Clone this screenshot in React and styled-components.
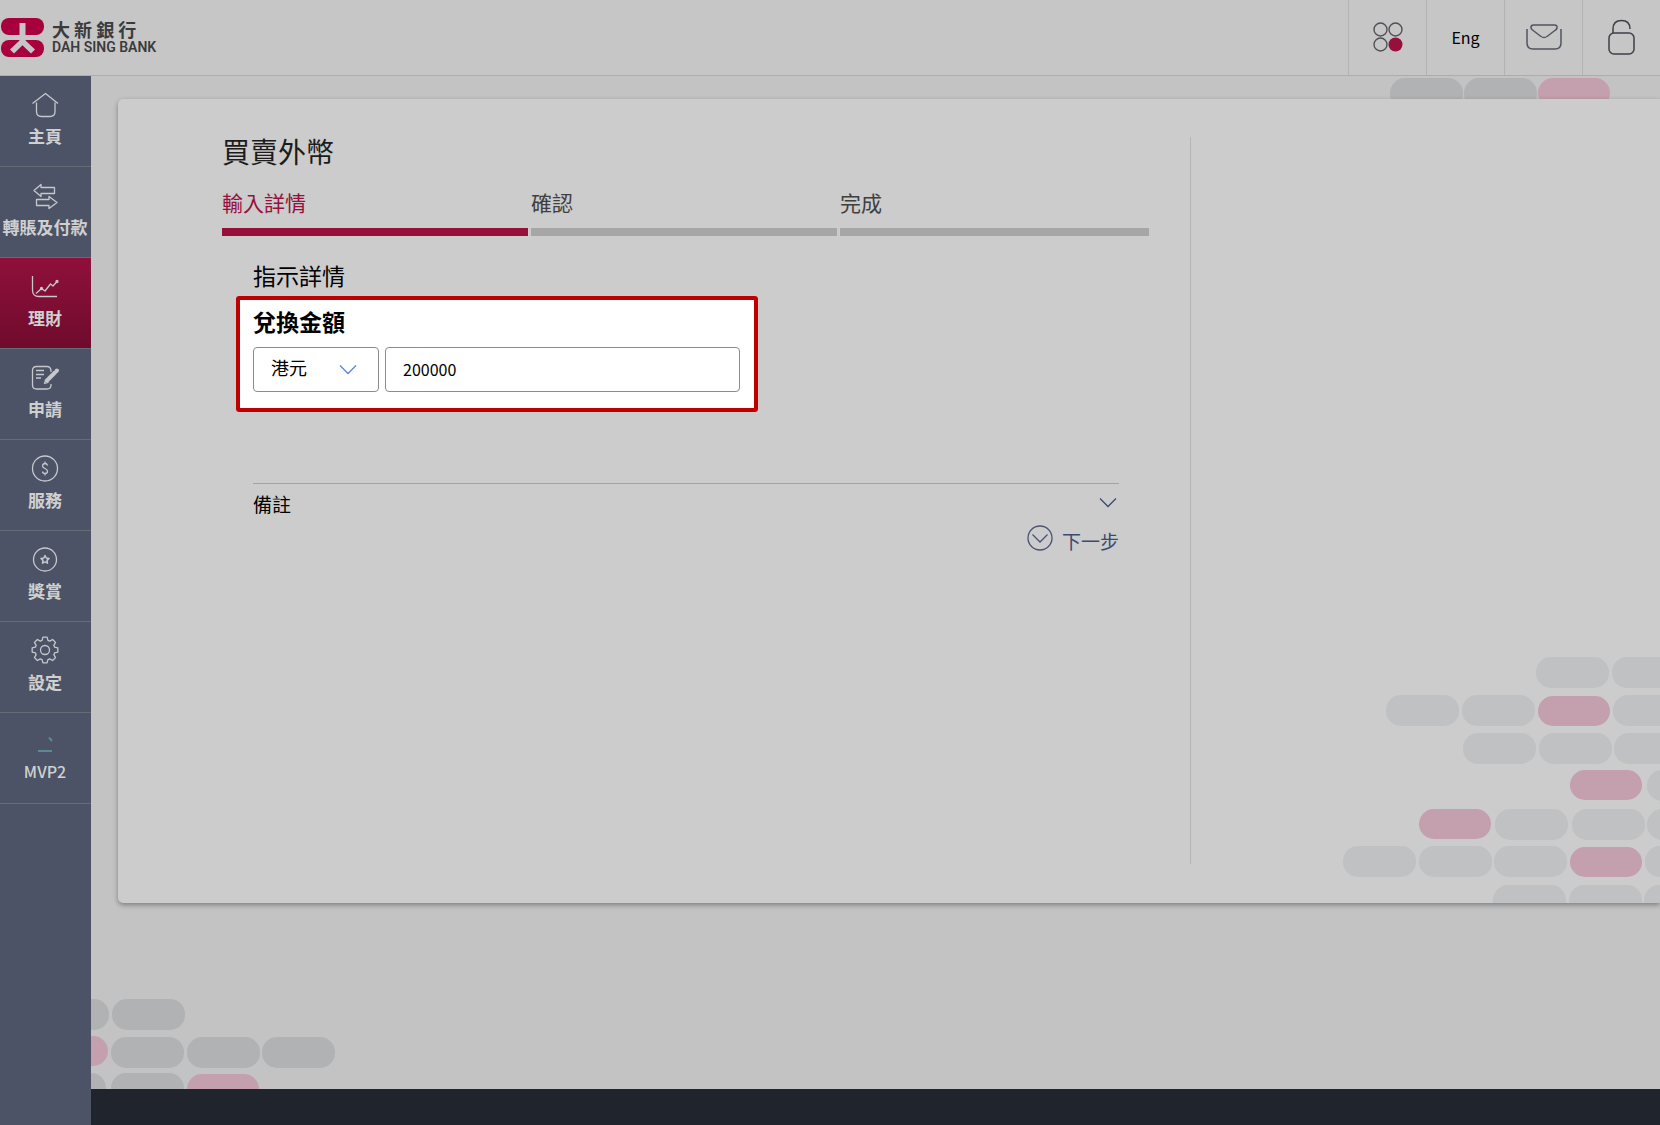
import React, { useState } from "react";
import styled, { createGlobalStyle } from "styled-components";

const MAGENTA = "#96103b";
const LOGO_RED = "#a8003c";
const SIDEBAR = "#4c5366";
const LINK_BLUE = "#3c4a72";
const PILL_PINK = "#c49fae";

const GlobalStyle = createGlobalStyle`
    *, *::before, *::after {
        box-sizing: border-box;
    }
    body {
        margin: 0;
        background: #c3c3c3;
        color: #000;
        font-family: "Noto Sans CJK TC", "Noto Sans", sans-serif;
        font-size: 16px;
    }
    button, input, select {
        font-family: inherit;
        color: inherit;
    }
    svg {
        display: block;
        flex: none;
    }
`;

const Page = styled.div`
    min-height: 100vh;
    display: flex;
    flex-direction: column;
`;

const Header = styled.header`
    height: 76px;
    display: flex;
    justify-content: space-between;
    background: #c6c6c6;
    border-bottom: 1px solid #adadad;
`;

const Brand = styled.a`
    display: flex;
    align-items: center;
    gap: 6px;
    color: #3b3b3d;
    text-decoration: none;
`;

const BrandText = styled.span`
    display: flex;
    flex-direction: column;
`;

const BrandName = styled.span`
    font-size: 18px;
    font-weight: 700;
    line-height: 19px;
`;

const BrandLatin = styled.span`
    font-family: Roboto, sans-serif;
    font-size: 14px;
    font-weight: 600;
    line-height: 17px;
`;

const HeaderTools = styled.div`
    display: flex;
`;

const HeaderButton = styled.button`
    width: 78px;
    display: flex;
    align-items: center;
    justify-content: center;
    padding: 0 0 2px;
    border: none;
    border-left: 1px solid #b3b3b3;
    background: none;
    font-size: 16px;
`;

const Body = styled.div`
    flex: 1;
    display: flex;
`;

const Sidebar = styled.nav`
    width: 91px;
    flex: none;
    background: ${SIDEBAR};
`;

const NavItem = styled.a`
    height: 91px;
    display: flex;
    flex-direction: column;
    align-items: center;
    gap: ${({ $plain }) => ($plain ? "2px" : "4px")};
    padding: 14px 1px 0 0;
    border-bottom: 1px solid #666b76;
    background: ${({ $active }) =>
        $active ? "linear-gradient(#8f103b, #6f0b2d)" : "none"};
    color: #d0d0d0;
    font-size: ${({ $plain }) => ($plain ? "16px" : "17px")};
    font-weight: ${({ $plain }) => ($plain ? 500 : 700)};
    line-height: 24px;
    white-space: nowrap;
    text-decoration: none;
`;

const Content = styled.div`
    flex: 1;
    min-width: 0;
    display: flex;
    flex-direction: column;
`;

const Main = styled.main`
    position: relative;
    flex: 1;
    display: flex;
    padding: 23px 0 186px 27px;
    overflow: hidden;
`;

const Backdrop = styled.svg`
    position: absolute;
    top: ${({ $top }) => $top || "auto"};
    right: ${({ $right }) => $right || "auto"};
    bottom: ${({ $bottom }) => $bottom || "auto"};
    left: ${({ $left }) => $left || "auto"};
`;

const Card = styled.section`
    position: relative;
    flex: 1;
    display: flex;
    gap: 41px;
    padding: 38px 0 39px 104px;
    background: #ccc;
    border-radius: 5px 0 0 5px;
    box-shadow: 0 2px 5px rgba(0, 0, 0, 0.35);
`;

const Exchange = styled.div`
    flex: 1;
    min-width: 0;
`;

const SidePanel = styled.aside`
    width: 470px;
    flex: none;
    border-left: 1px solid #b5b5b5;
`;

const Title = styled.h1`
    margin: 0 0 22px;
    color: #1c1c1c;
    font-size: 28px;
    font-weight: 400;
    line-height: 28px;
`;

const Steps = styled.ol`
    display: grid;
    grid-template-columns: repeat(3, 1fr);
    margin: 0;
    padding: 0;
    list-style: none;
`;

const Step = styled.li`
    color: ${({ $active }) => ($active ? MAGENTA : "#3f3f3f")};
    font-size: 21px;
    line-height: 30px;

    &::after {
        content: "";
        display: block;
        height: 8px;
        margin: 11px 3px 0 0;
        background: ${({ $active }) => ($active ? MAGENTA : "#a6a6a6")};
    }
    &:last-child::after {
        margin-right: 0;
    }
`;

const Form = styled.form`
    padding: 24px 30px 0 14px;
`;

const SectionTitle = styled.h2`
    margin: 0 0 6px 17px;
    font-size: 23px;
    font-weight: 400;
    line-height: 30px;
`;

const AmountBox = styled.fieldset`
    max-width: 522px;
    margin: 0;
    padding: 6px 14px 16px 13px;
    border: 4px solid #c00000;
    border-radius: 3px;
    background: #fff;
`;

const AmountLabel = styled.label`
    display: block;
    margin-bottom: 11px;
    font-size: 23px;
    font-weight: 700;
    line-height: 30px;
`;

const AmountRow = styled.div`
    display: flex;
    gap: 6px;
`;

const SelectWrap = styled.div`
    position: relative;
    width: 126px;

    svg {
        position: absolute;
        top: 17px;
        right: 22px;
        pointer-events: none;
    }
`;

const CurrencySelect = styled.select`
    appearance: none;
    width: 100%;
    height: 45px;
    padding: 0 40px 6px 17px;
    border: 1px solid #8c8c8c;
    border-radius: 4px;
    background: #fff;
    font-size: 18px;
`;

const AmountInput = styled.input`
    flex: 1;
    min-width: 0;
    height: 45px;
    padding: 0 17px 2px;
    border: 1px solid #8c8c8c;
    border-radius: 4px;
    background: #fff;
    font-size: 16px;
    outline: none;
`;

const RemarksButton = styled.button`
    width: calc(100% - 17px);
    height: 41px;
    display: flex;
    align-items: center;
    justify-content: space-between;
    margin: 71px 0 0 17px;
    padding: 0 2px 2px 0;
    border: none;
    border-top: 1px solid #a3a3a3;
    background: none;
    font-size: 19px;
`;

const Actions = styled.div`
    display: flex;
    justify-content: flex-end;
`;

const NextButton = styled.button`
    display: flex;
    gap: 9px;
    padding: 0;
    border: none;
    background: none;
    color: ${LINK_BLUE};
    font-size: 19px;
    line-height: 34px;
`;

const Footer = styled.footer`
    height: 36px;
    background: #20242c;
`;

const GEAR_PATH = (() => {
    const points = [];
    for (let i = 0; i < 8; i++) {
        [
            [-0.3, 10],
            [-0.16, 13],
            [0.16, 13],
            [0.3, 10],
        ].forEach(([offset, r]) => {
            const a = (i * Math.PI) / 4 + offset;
            points.push(
                `${(15 + r * Math.sin(a)).toFixed(2)} ${(14 - r * Math.cos(a)).toFixed(2)}`
            );
        });
    }
    return `M${points.join("L")}Z`;
})();

const NAV_ITEMS = [
    {
        label: "主頁",
        icon: (
            <>
                <path d="M2.5 13.5 15.5 3.5 28 13.5" />
                <path d="M6.5 12.5v9q0 5 5 5h8.5q5 0 5-5v-9" />
            </>
        ),
    },
    {
        label: "轉賬及付款",
        icon: (
            <>
                <path d="M24.5 6.5H11v-3l-7 6 7 6v-3h13.5z" />
                <path d="M6.5 18.5H19v-3l8 6-8 6v-3H6.5z" />
            </>
        ),
    },
    {
        label: "理財",
        active: true,
        icon: (
            <>
                <path d="M2.5 4v14q0 6.5 6.5 6.5h18" />
                <path d="M6 21.5 11.5 16.5 15 19 20.5 12 23 14 27 9.5" />
                <circle cx="11.5" cy="16.5" r="1" />
                <circle cx="27" cy="9.5" r="1" />
            </>
        ),
    },
    {
        label: "申請",
        icon: (
            <>
                <path d="M21 9V7.5Q20.5 3.5 17 3.5H6.5q-4 0-4 4V22q0 4 4 4H17q4 0 4-4v-1" />
                <path d="M6 7.5h8M6 11.5h8M6 15h5" />
                <path d="M16 18.5 25.5 9" strokeWidth="4" />
                <path d="M15.5 17.5 14.5 20.5 18 19.5z" />
                <path d="M26.5 8 27 7.5" strokeWidth="4" strokeLinecap="round" />
            </>
        ),
    },
    {
        label: "服務",
        icon: (
            <>
                <circle cx="15" cy="14.5" r="12.5" />
                <path d="M17.5 11.5q-.5-2-2.5-2t-2.5 2.3q0 1.7 2.5 2.7t2.5 2.7q0 2.3-2.5 2.3t-2.5-2M15 7.5v2M15 19.5v2" />
            </>
        ),
    },
    {
        label: "獎賞",
        icon: (
            <>
                <circle cx="15" cy="14.5" r="11.5" />
                <path
                    strokeWidth="1.5"
                    d="m15 10.500 1.200 2.500 2.800.4-2 2 .5 2.800-2.500-1.300-2.500 1.300.5-2.800-2-2 2.800-.4z"
                />
            </>
        ),
    },
    {
        label: "設定",
        icon: (
            <>
                <path d={GEAR_PATH} />
                <circle cx="15" cy="14" r="4.5" />
            </>
        ),
    },
    {
        label: "MVP2",
        plain: true,
        icon: (
            <>
                <path d="M8 24h14" stroke="#5c8b8c" strokeWidth="2" />
                <path d="m19 10.5 3 3.5" stroke="#5c8b8c" strokeWidth="2" />
            </>
        ),
    },
];

// [x, y, pink]
const TOP_PILLS = [
    [0, 2],
    [74, 2],
    [148, 2, true],
];

const CARD_PILLS = [
    [196, 4],
    [272, 4],
    [46, 42],
    [122, 42],
    [198, 43, true],
    [273, 42],
    [123, 80],
    [199, 80],
    [274, 80],
    [230, 117, true],
    [307, 117],
    [79, 156, true],
    [155, 156],
    [232, 156],
    [307, 156],
    [3, 193],
    [79, 193],
    [154, 193],
    [230, 194, true],
    [305, 193],
    [153, 232],
    [229, 232],
    [304, 232],
];

const BOTTOM_PILLS = [
    [-55, 5],
    [21, 5],
    [-55, 42, true],
    [20, 43],
    [96, 43],
    [171, 43],
    [-58, 79],
    [20, 79],
    [96, 80, true],
];

function Pills({ items, fill, width, height, ...place }) {
    return (
        <Backdrop width={width} height={height} aria-hidden="true" {...place}>
            {items.map(([x, y, pink]) => (
                <rect
                    key={`${x}-${y}`}
                    x={x}
                    y={y}
                    width={pink ? 72 : 73}
                    height={pink ? 30 : 31}
                    rx="15"
                    fill={pink ? PILL_PINK : fill}
                />
            ))}
        </Backdrop>
    );
}

function Logo() {
    return (
        <svg width="46" height="40" viewBox="0 0 46 40" aria-hidden="true">
            <rect x="1" y="0" width="43" height="17" rx="8" fill={LOGO_RED} />
            <rect x="1" y="22" width="43" height="17" rx="8" fill={LOGO_RED} />
            <path
                d="M19.5 5h6v17.500l9.500 9-4 4-8.500-8.300-8.500 8.300-4-4 9.500-9z"
                fill="#c6c6c6"
            />
        </svg>
    );
}

function Chevron({ color }) {
    return (
        <svg width="18" height="12" viewBox="0 0 18 12" fill="none" aria-hidden="true">
            <path d="m1 1.5 8 8 8-8" stroke={color} strokeWidth="1.3" />
        </svg>
    );
}

function App() {
    const [currency, setCurrency] = useState("HKD");
    const [amount, setAmount] = useState("200000");

    return (
        <Page>
            <GlobalStyle />
            <Header>
                <Brand href="#">
                    <Logo />
                    <BrandText>
                        <BrandName>大 新 銀 行</BrandName>
                        <BrandLatin>DAH SING BANK</BrandLatin>
                    </BrandText>
                </Brand>
                <HeaderTools>
                    <HeaderButton aria-label="Menu">
                        <svg width="30" height="30" fill="none" stroke="#4e5157" strokeWidth="1.4">
                            <circle cx="7.5" cy="7.5" r="6.5" />
                            <circle cx="22.5" cy="7.5" r="6.5" />
                            <circle cx="7.5" cy="22.5" r="6.5" />
                            <circle cx="22.5" cy="22.5" r="7" fill={MAGENTA} stroke="none" />
                        </svg>
                    </HeaderButton>
                    <HeaderButton>Eng</HeaderButton>
                    <HeaderButton aria-label="Mail">
                        <svg width="36" height="26" fill="none" stroke="#50545f" strokeWidth="1.5">
                            <path d="M1 5v14q0 6 6 6h22q6 0 6-6V5" />
                            <path d="M7.5 1h21q3 0 2.500 3-.3 1.300-1.500 2L21 12.500q-3 2-6 0L6.500 6Q5 5 5 3.500 5 1 7.500 1z" />
                        </svg>
                    </HeaderButton>
                    <HeaderButton aria-label="Logout">
                        <svg width="28" height="36" fill="none" stroke="#3d4048" strokeWidth="1.5">
                            <rect x="1" y="14" width="25" height="21" rx="5" />
                            <path d="M5 14V10q0-8.5 8.5-8.5T22 10" />
                        </svg>
                    </HeaderButton>
                </HeaderTools>
            </Header>
            <Body>
                <Sidebar>
                    {NAV_ITEMS.map(({ label, icon, active, plain }) => (
                        <NavItem key={label} href="#" $active={active} $plain={plain}>
                            <svg
                                width="30"
                                height="30"
                                fill="none"
                                stroke="#c6c8cc"
                                strokeWidth="1.3"
                                strokeLinejoin="round"
                                aria-hidden="true"
                            >
                                {icon}
                            </svg>
                            {label}
                        </NavItem>
                    ))}
                </Sidebar>
                <Content>
                    <Main>
                        <Pills
                            items={TOP_PILLS}
                            fill="#b0b2b4"
                            width={270}
                            height={40}
                            $top="0"
                            $right="0"
                        />
                        <Pills
                            items={BOTTOM_PILLS}
                            fill="#b0b2b4"
                            width={260}
                            height={95}
                            $bottom="0"
                            $left="0"
                        />
                        <Card>
                            <Pills
                                items={CARD_PILLS}
                                fill="#bfc1c3"
                                width={320}
                                height={250}
                                $bottom="0"
                                $right="0"
                            />
                            <Exchange>
                                <Title>買賣外幣</Title>
                                <Steps>
                                    <Step $active>輸入詳情</Step>
                                    <Step>確認</Step>
                                    <Step>完成</Step>
                                </Steps>
                                <Form onSubmit={(e) => e.preventDefault()}>
                                    <SectionTitle>指示詳情</SectionTitle>
                                    <AmountBox>
                                        <AmountLabel htmlFor="amount">兌換金額</AmountLabel>
                                        <AmountRow>
                                            <SelectWrap>
                                                <CurrencySelect
                                                    aria-label="貨幣"
                                                    value={currency}
                                                    onChange={(e) => setCurrency(e.target.value)}
                                                >
                                                    <option value="HKD">港元</option>
                                                </CurrencySelect>
                                                <Chevron color="#5b86d6" />
                                            </SelectWrap>
                                            <AmountInput
                                                id="amount"
                                                value={amount}
                                                onChange={(e) => setAmount(e.target.value)}
                                            />
                                        </AmountRow>
                                    </AmountBox>
                                    <RemarksButton type="button">
                                        備註
                                        <Chevron color={LINK_BLUE} />
                                    </RemarksButton>
                                    <Actions>
                                        <NextButton type="submit">
                                            <svg
                                                width="26"
                                                height="28"
                                                fill="none"
                                                stroke="#4a5273"
                                                strokeWidth="1.3"
                                                aria-hidden="true"
                                            >
                                                <circle cx="13" cy="14" r="12" />
                                                <path d="m5.5 10.5 7.5 7.5 7.5-7.5" />
                                            </svg>
                                            下一步
                                        </NextButton>
                                    </Actions>
                                </Form>
                            </Exchange>
                            <SidePanel />
                        </Card>
                    </Main>
                    <Footer />
                </Content>
            </Body>
        </Page>
    );
}

export default App;
